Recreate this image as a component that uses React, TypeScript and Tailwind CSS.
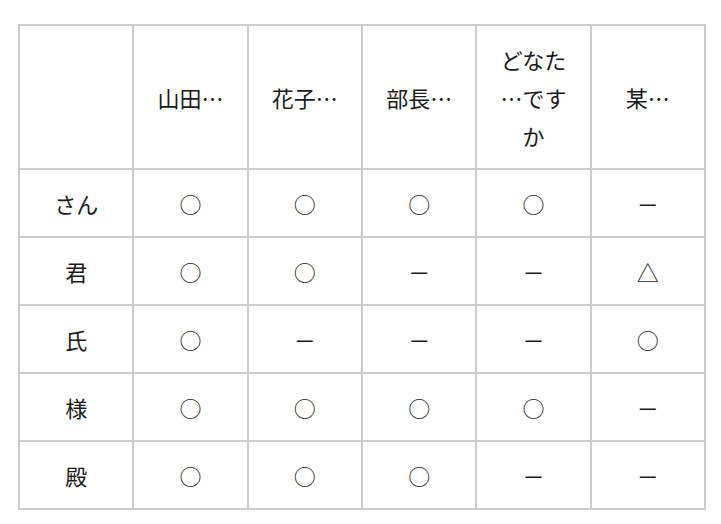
const cols = ["山田…", "花子…", "部長…", "どなた…ですか", "某…"];

const rows: { label: string; marks: string[] }[] = [
  { label: "さん", marks: ["○", "○", "○", "○", "－"] },
  { label: "君", marks: ["○", "○", "－", "－", "△"] },
  { label: "氏", marks: ["○", "－", "－", "－", "○"] },
  { label: "様", marks: ["○", "○", "○", "○", "－"] },
  { label: "殿", marks: ["○", "○", "○", "－", "－"] },
];

const cell =
  "border-2 border-[#cccccc] px-[16px] py-[14px] text-center align-middle leading-[38px]";

export default function App() {
  return (
    <div
      className="bg-white min-h-[524px] pt-[24px] pl-[18px] text-[#1a1a1a] text-[22px]"
      style={{ fontFamily: '"Noto Sans CJK JP", "Noto Sans", sans-serif' }}
    >
      <table className="table-fixed border-collapse w-[688px]">
        <thead>
          <tr>
            <th className={cell + " font-normal"}></th>
            {cols.map((c) => (
              <th key={c} className={cell + " font-normal [line-break:anywhere]"}>
                {c}
              </th>
            ))}
          </tr>
        </thead>
        <tbody>
          {rows.map((r) => (
            <tr key={r.label}>
              <td className={cell}>{r.label}</td>
              {r.marks.map((m, i) => (
                <td key={i} className={cell}>
                  {m}
                </td>
              ))}
            </tr>
          ))}
        </tbody>
      </table>
    </div>
  );
}
